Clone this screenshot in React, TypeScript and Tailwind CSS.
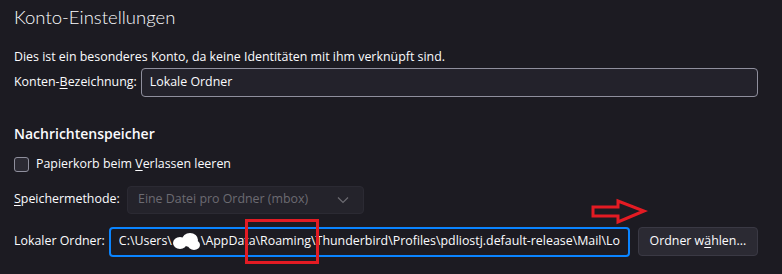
import React from 'react';

const Blot = () => (
  <svg width="29" height="18" viewBox="0 0 29 18" className="inline-block shrink-0 align-middle -mt-[2px]">
    <ellipse cx="8" cy="11" rx="7" ry="6" fill="#fff" />
    <ellipse cx="18" cy="8" rx="8" ry="7" fill="#fff" />
    <ellipse cx="22" cy="13" rx="6" ry="5" fill="#fff" />
  </svg>
);

const App = () => {
  return (
    <div
      className="relative w-[782px] h-[274px] overflow-hidden bg-[#1c1b22] text-[#fbfbfe] pl-[14px] pr-[24px] text-[12.4px]"
      style={{ fontFamily: '"Open Sans", "Noto Sans", sans-serif' }}
    >
      <h1 className="pt-[5px] text-[18.5px] font-light leading-[24px]" style={{ fontFamily: 'Lato, sans-serif' }}>
        Konto-Einstellungen
      </h1>

      <p className="mt-[20px] leading-[16px]">
        Dies ist ein besonderes Konto, da keine Identitäten mit ihm verknüpft sind.
      </p>

      <div className="mt-[3px] flex items-center gap-[4px]">
        <label className="whitespace-nowrap">
          Konten-<u className="underline-offset-2">B</u>ezeichnung:
        </label>
        <div className="flex-1 h-[29px] flex items-center px-[8px] rounded-[4px] border border-[#8f8f9d] bg-[#23222b]">
          Lokale Ordner
        </div>
      </div>

      <h2 className="mt-[27px] text-[14px] font-semibold leading-[20px]">Nachrichtenspeicher</h2>

      <div className="mt-[11px] flex items-center gap-[7px]">
        <span className="w-[15px] h-[15px] rounded-[3px] border border-[#8f8f9d] bg-[#2b2a33]" />
        <span>
          Papierkorb beim <u className="underline-offset-2">V</u>erlassen leeren
        </span>
      </div>

      <div className="mt-[12px] flex items-center">
        <span className="w-[113px]">
          <u className="underline-offset-2">S</u>peichermethode:
        </span>
        <div className="w-[237px] h-[28px] flex items-center justify-between px-[10px] rounded-[4px] bg-[#24232b] border border-[#2b2a33] text-[#6c6b72]">
          <span>Eine Datei pro Ordner (mbox)</span>
          <svg width="12" height="8" viewBox="0 0 12 8" className="mr-[4px]">
            <polyline points="1,1.5 6,6.5 11,1.5" fill="none" stroke="#6c6b72" strokeWidth="1.2" />
          </svg>
        </div>
      </div>

      <div className="mt-[13px] flex items-center gap-[8px]">
        <span className="whitespace-nowrap">Lokaler Ordner:</span>
        <div className="w-[521px] shrink-0 h-[30px] flex items-center px-[8px] rounded-[4px] border-2 border-[#0a84ff] bg-[#1c1b22] -ml-[4px] overflow-hidden">
          <span className="block min-w-0 overflow-hidden whitespace-nowrap">
            C:\Users\<Blot />\AppData\Roaming\Thunderbird\Profiles\pdliostj.default-release\Mail\Lo
          </span>
        </div>
        <button className="w-[120px] shrink-0 h-[29px] rounded-[4px] bg-[#2b2a33] border border-[#3a3944]">
          Ordner w<u className="underline-offset-2">ä</u>hlen...
        </button>
      </div>

      <div className="absolute left-[245px] top-[219px] w-[74px] h-[45px] border-[3px] border-[#e31b23]" />

      <svg className="absolute left-0 top-0 pointer-events-none" width="782" height="274">
        <polygon
          points="593,207 618,207 618,201 644,211 618,222 618,216 593,216"
          fill="none"
          stroke="#e31b23"
          strokeWidth="3"
        />
      </svg>
    </div>
  );
};

export default App;
